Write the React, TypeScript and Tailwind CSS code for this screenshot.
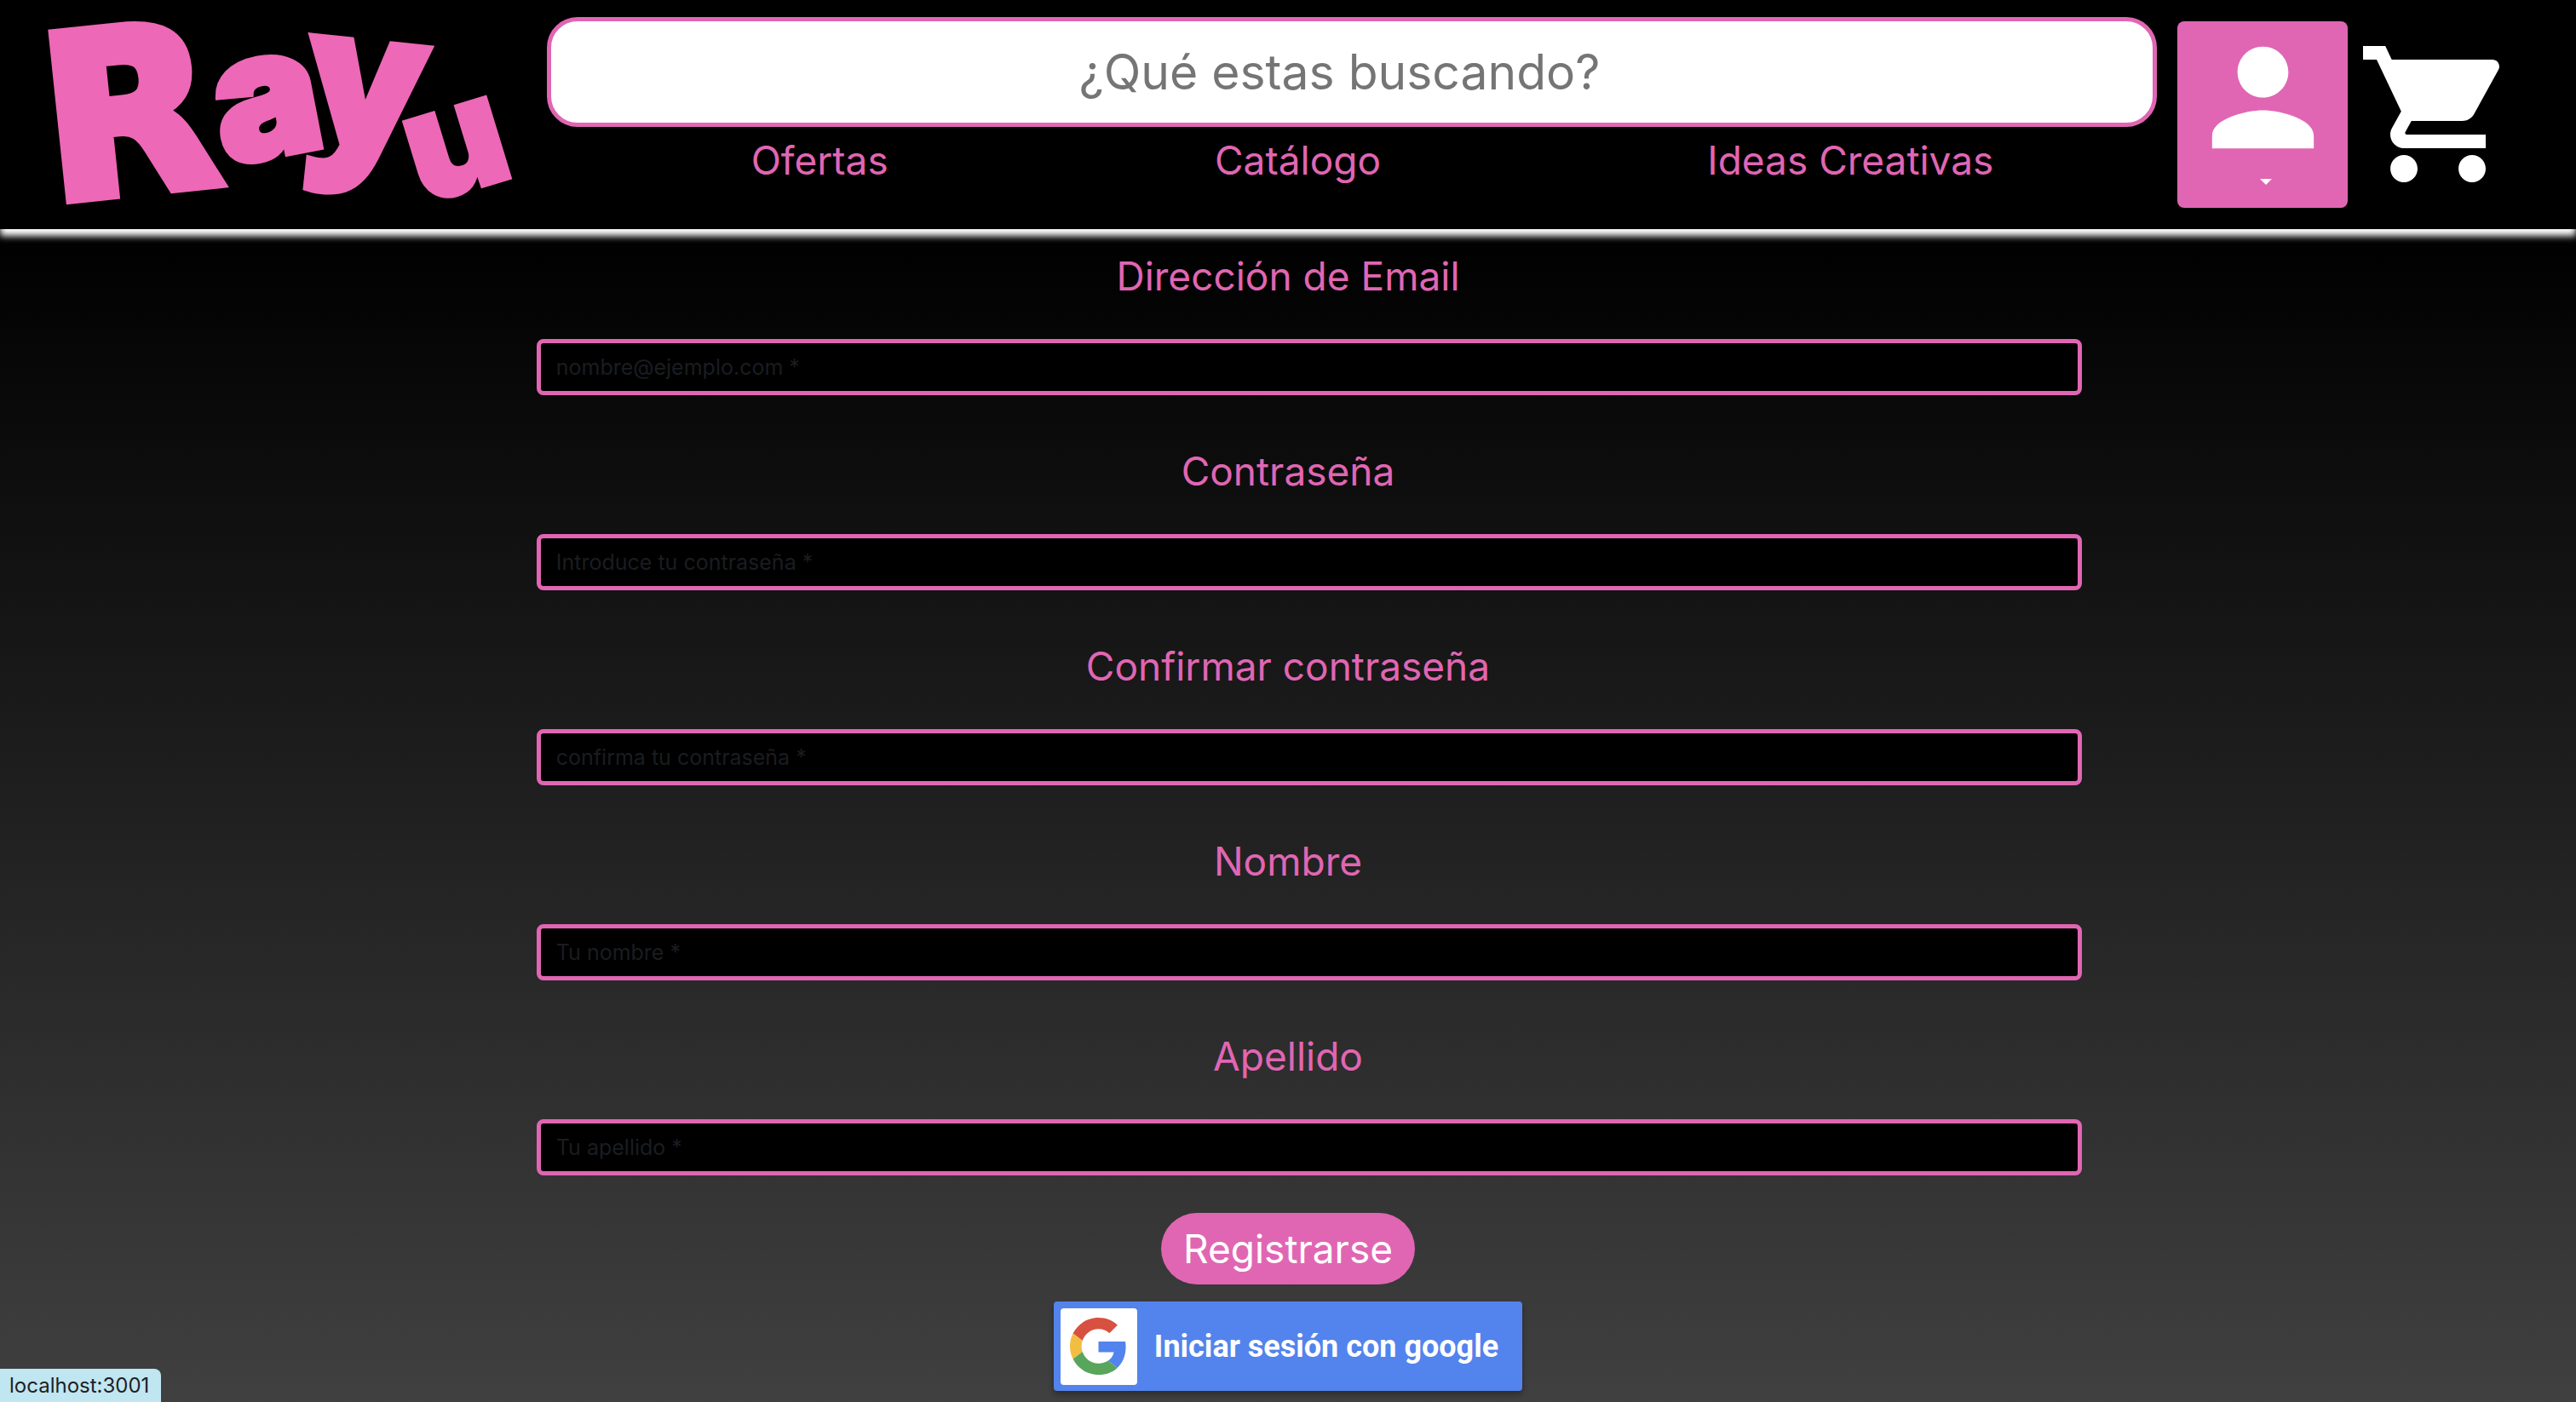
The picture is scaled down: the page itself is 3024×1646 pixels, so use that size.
import { useId } from "react";

const fields = [
  { label: "Dirección de Email", placeholder: "nombre@ejemplo.com *", type: "email" },
  { label: "Contraseña", placeholder: "Introduce tu contraseña *", type: "password" },
  { label: "Confirmar contraseña", placeholder: "confirma tu contraseña *", type: "password" },
  { label: "Nombre", placeholder: "Tu nombre *", type: "text" },
  { label: "Apellido", placeholder: "Tu apellido *", type: "text" },
];

const links = ["Ofertas", "Catálogo", "Ideas Creativas"];

function Logo() {
  return (
    <a href="#inicio" aria-label="Rayu" className="shrink-0">
      <svg
        viewBox="0 0 618 269"
        className="block h-[269px] w-[618px] overflow-visible fill-[#ed68b6] stroke-[#ed68b6] font-black"
      >
        <text className="font-['DejaVu_Sans',sans-serif]" transform="translate(60 235) rotate(-6)" fontSize="264" strokeWidth="14">R</text>
        <text className="font-[Inter,sans-serif]" transform="translate(264 194) rotate(-11)" fontSize="208" strokeWidth="8">a</text>
        <text className="font-['Open_Sans',sans-serif]" transform="translate(354 167) rotate(6)" fontSize="226" strokeWidth="8">y</text>
        <text className="font-[Inter,sans-serif]" transform="translate(495 240) rotate(-17)" fontSize="180" strokeWidth="5">u</text>
      </svg>
    </a>
  );
}

function Header() {
  return (
    <header className="relative flex h-[269px] items-start bg-black pr-[66px] shadow-[0_8px_8px_#fff]">
      <Logo />
      <div className="ml-6 flex flex-1 flex-col pt-5">
        <input
          type="search"
          aria-label="Buscar"
          placeholder="¿Qué estas buscando?"
          className="h-[129px] w-full rounded-[36px] border-[5px] border-[#e066b3] bg-white pr-1 text-center text-[57px] text-black outline-none placeholder:text-[#757575]"
        />
        <nav className="flex justify-around pt-2 pl-12 text-[46px] leading-[62px] text-[#e066b3]">
          {links.map((text) => (
            <a key={text} href="#">
              {text}
            </a>
          ))}
        </nav>
      </div>
      <button
        type="button"
        aria-label="Cuenta"
        className="mt-[25px] ml-6 flex h-[219px] w-[200px] shrink-0 flex-col items-center rounded-lg bg-[#e066b3] text-white"
      >
        <svg viewBox="0 0 24 24" className="block size-[179px] fill-current">
          <path d="M12 12c2.21 0 4-1.79 4-4s-1.79-4-4-4-4 1.79-4 4 1.79 4 4 4zm0 2c-2.67 0-8 1.34-8 4v2h16v-2c0-2.66-5.33-4-8-4z" />
        </svg>
        <svg viewBox="0 0 14 7" className="mt-[6px] ml-2 block h-[7px] w-[14px] fill-current">
          <path d="M0 0h14L7 7z" />
        </svg>
      </button>
      <a href="#carrito" aria-label="Carrito" className="mt-[38px] ml-[10px] shrink-0 text-white">
        <svg viewBox="0 0 24 24" className="block size-48 fill-current">
          <path d="M7 18c-1.1 0-1.99.9-1.99 2S5.9 22 7 22s2-.9 2-2-.9-2-2-2zM1 2v2h2l3.6 7.59-1.35 2.45c-.16.28-.25.61-.25.96 0 1.1.9 2 2 2h12v-2H7.42c-.14 0-.25-.11-.25-.25l.03-.12.9-1.63h7.45c.75 0 1.41-.41 1.75-1.03l3.58-6.49c.08-.14.12-.31.12-.48 0-.55-.45-1-1-1H5.21l-.94-2H1zm16 16c-1.1 0-1.99.9-1.99 2s.89 2 1.99 2 2-.9 2-2-.9-2-2-2z" />
        </svg>
      </a>
    </header>
  );
}

function Field({ label, placeholder, type }: { label: string; placeholder: string; type: string }) {
  const id = useId();
  return (
    <div className="flex w-full flex-col items-center">
      <label htmlFor={id} className="text-[46px] leading-[62px] text-[#e066b3]">
        {label}
      </label>
      <input
        id={id}
        type={type}
        placeholder={placeholder}
        className="mt-[43px] mb-[58px] ml-[50px] h-[66px] w-3/5 rounded-lg border-[5px] border-[#e066b3] bg-black px-[18px] text-[25px] text-white outline-none placeholder:text-[#1a1d20]"
      />
    </div>
  );
}

function GoogleMark() {
  return (
    <svg viewBox="0 0 48 48" className="size-[67px]">
      <path fill="#d85140" d="M24 9.5c3.54 0 6.71 1.22 9.21 3.6l6.85-6.85C35.9 2.38 30.47 0 24 0 14.62 0 6.51 5.38 2.56 13.22l7.98 6.19C12.43 13.72 17.74 9.5 24 9.5z" />
      <path fill="#5383ec" d="M46.98 24.55c0-1.57-.15-3.09-.38-4.55H24v9.02h12.94c-.58 2.96-2.26 5.48-4.78 7.18l7.73 6c4.51-4.18 7.09-10.36 7.09-17.65z" />
      <path fill="#f1be42" d="M10.53 28.59c-.48-1.45-.76-2.99-.76-4.59s.27-3.14.76-4.59l-7.98-6.19C.92 16.46 0 20.12 0 24c0 3.88.92 7.54 2.56 10.78l7.97-6.19z" />
      <path fill="#58a55c" d="M24 48c6.48 0 11.93-2.13 15.89-5.81l-7.73-6c-2.15 1.45-4.92 2.3-8.16 2.3-6.26 0-11.57-4.22-13.47-9.91l-7.98 6.19C6.51 42.62 14.62 48 24 48z" />
    </svg>
  );
}

export default function App() {
  return (
    <div className="flex min-h-screen flex-col bg-black font-[Inter,sans-serif]">
      <Header />
      <main className="flex flex-1 flex-col bg-linear-to-b/srgb from-black to-[#404040] pt-6">
        <form className="flex flex-col items-center" onSubmit={(event) => event.preventDefault()}>
          {fields.map((field) => (
            <Field key={field.label} {...field} />
          ))}
          <button type="submit" className="-mt-[14px] h-[84px] rounded-full bg-[#e066b3] px-[26px] text-[46px] text-white">
            Registrarse
          </button>
          <button
            type="button"
            className="mt-5 flex h-[105px] items-center rounded-sm bg-[#5383ec] pr-7 pl-2 font-[Roboto,sans-serif] text-4xl font-bold text-white shadow-[0_4px_6px_rgba(0,0,0,0.3)]"
          >
            <span className="mr-5 flex size-[90px] items-center justify-center rounded-sm bg-white">
              <GoogleMark />
            </span>
            Iniciar sesión con google
          </button>
        </form>
      </main>
      <div className="fixed bottom-0 left-0 flex h-[39px] items-center rounded-tr-lg bg-[#c0e6f1] pr-[14px] pl-[11px] text-2xl text-[#202124]">
        localhost:3001
      </div>
    </div>
  );
}
